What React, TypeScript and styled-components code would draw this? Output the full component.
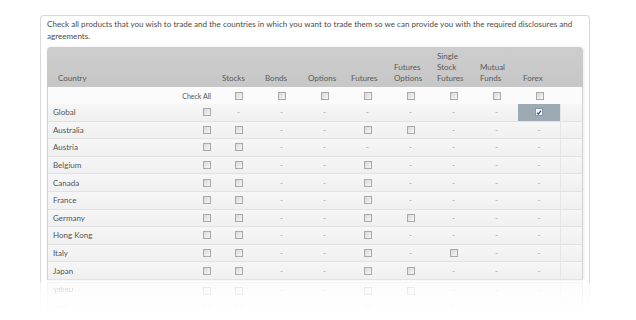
import React from "react";
import styled, { createGlobalStyle } from "styled-components";

const COLUMNS = ["Stocks", "Bonds", "Options", "Futures", "Futures\nOptions", "Single\nStock\nFutures", "Mutual\nFunds", "Forex"];

// x = checkbox, - = not offered, c = checked (selected)
const COUNTRIES: [string, string][] = [
  ["Global", "-------c"],
  ["Australia", "x--xx---"],
  ["Austria", "x-------"],
  ["Belgium", "x--x----"],
  ["Canada", "x--x----"],
  ["France", "x--x----"],
  ["Germany", "x--xx---"],
  ["Hong Kong", "x--x----"],
  ["Italy", "x--x-x--"],
  ["Japan", "x--xx---"],
];

const GRID = "148px 21px repeat(8, 43px) 22px";

function Check({ checked = false }) {
  return (
    <Box $checked={checked}>
      {checked && (
        <svg width="7" height="7" viewBox="0 0 7 7">
          <path d="M1.2 3.8 L2.8 5.4 L5.8 1.2" fill="none" stroke="#2b4ea3" strokeWidth="1.4" />
        </svg>
      )}
    </Box>
  );
}

function CountryRow({ name, flags }: { name: string; flags: string }) {
  return (
    <Row>
      <Name>{name}</Name>
      <Cell>
        <Check />
      </Cell>
      {flags.split("").map((f, i) => (
        <Cell key={i} $highlight={f === "c"} $edge={i === 7}>
          {f === "-" ? <Dash>-</Dash> : <Check checked={f === "c"} />}
        </Cell>
      ))}
      <Cell />
    </Row>
  );
}

export default function App() {
  return (
    <Stage>
      <GlobalStyle />
      <Panel>
        <Intro>
          Check all products that you wish to trade and the countries in which you want to trade them so we can provide
          you with the required disclosures and agreements.
        </Intro>
        <Table>
          <Header>
            <HeadLabel $country>Country</HeadLabel>
            {COLUMNS.map((c) => (
              <HeadLabel key={c}>{c}</HeadLabel>
            ))}
            <span />
          </Header>
          <CheckAllRow>
            <CheckAllLabel>Check All</CheckAllLabel>
            {COLUMNS.map((c) => (
              <Cell key={c}>
                <Check />
              </Cell>
            ))}
            <Cell />
          </CheckAllRow>
          {COUNTRIES.map(([name, flags]) => (
            <CountryRow key={name} name={name} flags={flags} />
          ))}
        </Table>
      </Panel>
      <Reflection aria-hidden>
        <ReflectionInner>
          {COUNTRIES.slice(-2).map(([name, flags]) => (
            <CountryRow key={name} name={name} flags={flags} />
          ))}
        </ReflectionInner>
      </Reflection>
    </Stage>
  );
}

const GlobalStyle = createGlobalStyle`
  html, body {
    margin: 0;
    background: #ffffff;
  }
  body {
    font-family: Lato, "Liberation Sans", sans-serif;
    color: #555;
  }
`;

const Stage = styled.div`
  padding: 15px 0 0 40px;
  height: 305px;
  overflow: hidden;
`;

const Panel = styled.div`
  width: 550px;
  height: 267px;
  box-sizing: border-box;
  border: 1px solid #d9d9d9;
  border-bottom: none;
  border-radius: 4px 4px 0 0;
  padding: 0 6px;
  overflow: hidden;
  background: #fff;
`;

const Intro = styled.p`
  margin: 0 0 5px;
  padding-top: 2px;
  font-size: 8px;
  line-height: 12px;
  letter-spacing: 0.035px;
  color: #4a4a4a;
`;

const Table = styled.div`
  display: flex;
  flex-direction: column;
  box-shadow: 1px 0 3px rgba(0, 0, 0, 0.08);
`;

const Header = styled.div`
  display: grid;
  grid-template-columns: 169px repeat(8, 43px) 22px;
  align-items: end;
  height: 40px;
  box-sizing: border-box;
  padding: 0 1px 3px;
  background: linear-gradient(#cdcdcd, #c7c7c7);
  border-radius: 4px 4px 0 0;
`;

const HeadLabel = styled.span<{ $country?: boolean }>`
  font-size: 8px;
  line-height: 11px;
  color: #5a5a5a;
  white-space: pre-line;
  padding-left: ${(p) => (p.$country ? "10px" : "5px")};
`;

const Row = styled.div`
  display: grid;
  grid-template-columns: ${GRID};
  height: 17.6px;
  box-sizing: border-box;
  border-left: 1px solid #d2d2d2;
  border-right: 1px solid #d2d2d2;
  border-bottom: 1px solid #e2e2e3;
  background: linear-gradient(#f6f6f7, #f0f0f1);
`;

const CheckAllRow = styled(Row)`
  grid-template-columns: 169px repeat(8, 43px) 22px;
  height: 17px;
  background: #fbfbfb;
  border-bottom: none;
`;

const CheckAllLabel = styled.span`
  font-size: 7px;
  color: #555;
  align-self: center;
  text-align: right;
  padding-right: 6px;
`;

const Name = styled.span`
  font-size: 8px;
  color: #555;
  align-self: center;
  padding-left: 5px;
`;

const Cell = styled.div<{ $highlight?: boolean; $edge?: boolean }>`
  display: flex;
  align-items: center;
  justify-content: center;
  background: ${(p) => (p.$highlight ? "#9eaab3" : "transparent")};
  border-right: ${(p) => (p.$edge ? "1px solid #e6e6e8" : "none")};
`;

const Box = styled.span<{ $checked?: boolean }>`
  display: flex;
  align-items: center;
  justify-content: center;
  width: 8px;
  height: 8px;
  box-sizing: border-box;
  border: 1px solid ${(p) => (p.$checked ? "#8a96a0" : "#a9a9a9")};
  background: ${(p) => (p.$checked ? "#f4f6fa" : "linear-gradient(135deg, #d8d8d8, #f7f7f7)")};
`;

const Dash = styled.span`
  font-size: 8px;
  line-height: 8px;
  color: #9a9a9a;
`;

const Reflection = styled.div`
  width: 550px;
  height: 38px;
  box-sizing: border-box;
  border-left: 1px solid #d9d9d9;
  border-right: 1px solid #d9d9d9;
  padding: 0 6px;
  overflow: hidden;
  display: flex;
  flex-direction: column;
  justify-content: flex-end;
  transform: scaleY(-1);
  -webkit-mask-image: linear-gradient(to top, rgba(0, 0, 0, 0.3), rgba(0, 0, 0, 0) 75%);
  mask-image: linear-gradient(to top, rgba(0, 0, 0, 0.3), rgba(0, 0, 0, 0) 75%);
`;

const ReflectionInner = styled.div`
  display: flex;
  flex-direction: column;
  flex-shrink: 0;
`;
